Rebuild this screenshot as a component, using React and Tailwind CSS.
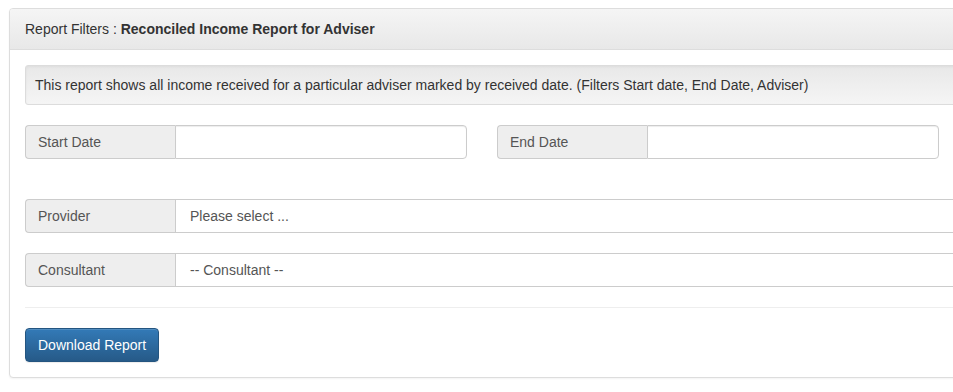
import React from "react";

const DateGroup = ({ label }) => (
  <div className="flex h-[34px] w-[442px]">
    <span className="flex w-[150px] items-center rounded-l-[4px] border border-r-0 border-[#ccc] bg-[#eee] px-3 text-[#555]">
      {label}
    </span>
    <input
      type="text"
      className="flex-1 rounded-r-[4px] border border-[#ccc] bg-white px-3 shadow-[inset_0_1px_1px_rgba(0,0,0,0.075)] outline-none"
    />
  </div>
);

const SelectGroup = ({ label, value }) => (
  <div className="flex h-[34px] w-full">
    <span className="flex w-[150px] items-center rounded-l-[4px] border border-r-0 border-[#ccc] bg-[#eee] px-3 text-[#555]">
      {label}
    </span>
    <div className="flex flex-1 items-center border border-[#ccc] bg-white pl-[14px] text-[#555]">
      {value}
    </div>
  </div>
);

export default function App() {
  return (
    <div className="h-[392px] w-[953px] overflow-hidden bg-white font-['Liberation_Sans',Arial,sans-serif] text-[14px] leading-[20px] text-[#333]">
      {/* Panel */}
      <div className="ml-[9px] mt-[8px] w-[1000px] rounded-[4px] border border-[#ddd] bg-white shadow-[0_1px_2px_rgba(0,0,0,0.05)]">
        {/* Header */}
        <div className="rounded-t-[3px] border-b border-[#ddd] bg-gradient-to-b from-[#f5f5f5] to-[#e8e8e8] px-[15px] py-[10px]">
          Report Filters : <b>Reconciled Income Report for Adviser</b>
        </div>

        {/* Body */}
        <div className="p-[15px]">
          <div className="rounded-[3px] border border-[#dcdcdc] bg-gradient-to-b from-[#e8e8e8] to-[#f5f5f5] px-[9px] py-[9px] shadow-[inset_0_1px_3px_rgba(0,0,0,0.05),0_1px_0_rgba(255,255,255,0.1)]">
            This report shows all income received for a particular adviser marked by received date. (Filters Start date, End Date, Adviser)
          </div>

          <div className="mt-[20px] flex gap-[30px]">
            <DateGroup label="Start Date" />
            <DateGroup label="End Date" />
          </div>

          <div className="mt-[40px]">
            <SelectGroup label="Provider" value="Please select ..." />
          </div>
          <div className="mt-[20px]">
            <SelectGroup label="Consultant" value="-- Consultant --" />
          </div>

          <hr className="my-[20px] border-t border-[#eee]" />

          <button className="h-[34px] rounded-[4px] border border-[#245580] bg-gradient-to-b from-[#337ab7] to-[#265a88] px-3 text-white shadow-[inset_0_1px_0_rgba(255,255,255,0.15),0_1px_1px_rgba(0,0,0,0.075)]">
            Download Report
          </button>
        </div>
      </div>
    </div>
  );
}
